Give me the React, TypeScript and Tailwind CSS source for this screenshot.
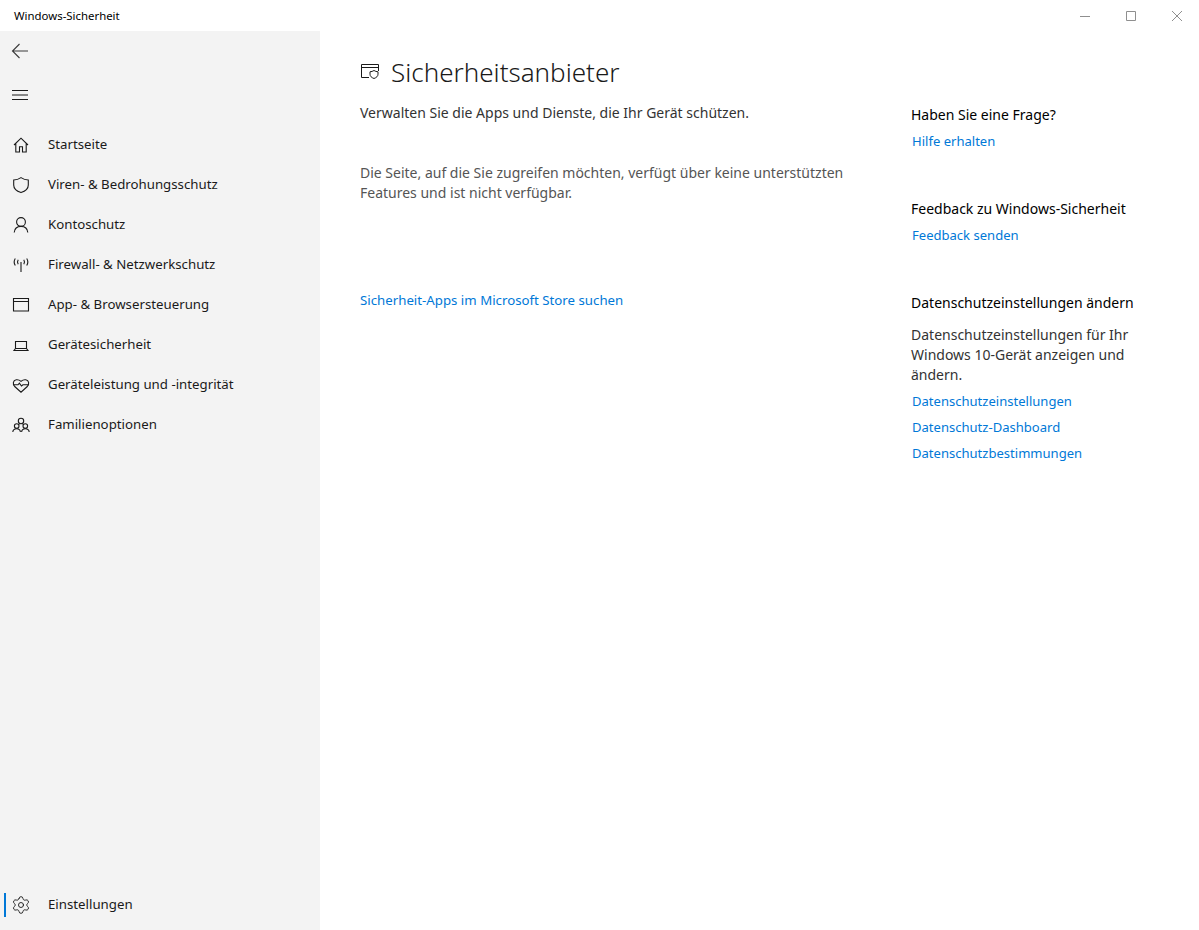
import type { ReactNode } from 'react';
import { Settings } from 'lucide-react';

const iconClass = 'w-5 h-5 text-[#1a1a1a]';

function Svg({ children }: { children: ReactNode }) {
  return (
    <svg viewBox="0 0 20 20" fill="none" stroke="currentColor" strokeWidth="1.1" className={iconClass}>
      {children}
    </svg>
  );
}

const navItems: { label: string; icon: ReactNode }[] = [
  {
    label: 'Startseite',
    icon: (
      <Svg>
        <path d="M3 10 10 3.200 17 10M4.800 8.600V17h3.700v-5.200h3V17h3.700V8.600" />
      </Svg>
    ),
  },
  {
    label: 'Viren- & Bedrohungsschutz',
    icon: (
      <Svg>
        <path d="M10 2.600c2.400 1.600 4.800 2.300 7.300 2.400v5c0 3.700-3 6.200-7.300 7.600-4.300-1.400-7.300-3.900-7.300-7.600V5c2.500-.1 4.900-.8 7.300-2.400Z" />
      </Svg>
    ),
  },
  {
    label: 'Kontoschutz',
    icon: (
      <Svg>
        <circle cx="10" cy="7" r="4.400" />
        <path d="M3.200 17.500c.3-3.800 3-6.100 6.800-6.100s6.500 2.300 6.800 6.100" />
      </Svg>
    ),
  },
  {
    label: 'Firewall- & Netzwerkschutz',
    icon: (
      <Svg>
        <path d="M10 7v10M7.200 4.800c-.9 1.400-.9 3 0 4.400M12.800 4.800c.9 1.400.9 3 0 4.400M4.300 3.500c-1.500 2.300-1.500 4.700 0 7M15.700 3.500c1.500 2.300 1.500 4.700 0 7" />
      </Svg>
    ),
  },
  {
    label: 'App- & Browsersteuerung',
    icon: (
      <Svg>
        <path d="M2.500 3.500h15v12.500h-15zM2.500 6.500h15" />
      </Svg>
    ),
  },
  {
    label: 'Gerätesicherheit',
    icon: (
      <Svg>
        <path d="M4.500 13.500V6.500h11v7M3 15.500h14l-1.500-2h-11z" />
      </Svg>
    ),
  },
  {
    label: 'Geräteleistung und -integrität',
    icon: (
      <Svg>
        <path d="M3.700 11.500C2.500 10 2 9 2.400 7.300 3 4.700 6.800 3.600 10 6.300c3.200-2.700 7-1.600 7.600 1 .4 1.700-.1 2.700-1.300 4.200L10 17.200Z" />
        <path d="M2.800 9.800H7l1.400-1.600 2.100 2.800 1.400-1.200h5.300" />
      </Svg>
    ),
  },
  {
    label: 'Familienoptionen',
    icon: (
      <Svg>
        <circle cx="10" cy="6" r="2.700" />
        <circle cx="5.700" cy="11" r="2.300" />
        <circle cx="14.300" cy="11" r="2.300" />
        <path d="M1.800 17c.2-1.900 1.800-3.200 3.900-3.200s3.500 1.300 3.700 3.200M10.600 17c.2-1.900 1.700-3.200 3.700-3.200s3.700 1.300 3.900 3.200M7.700 8.800c.3.200.5.400.7.700M12.300 8.800c-.3.200-.5.400-.7.700" />
      </Svg>
    ),
  },
];

function NavRow({ label, icon }: { label: string; icon: ReactNode }) {
  return (
    <div className="flex items-center h-10 pl-[11px]">
      <span className="w-5 h-5 flex-shrink-0 flex items-center justify-center">{icon}</span>
      <span className="ml-[17px] text-[13.25px] text-[#1a1a1a]">{label}</span>
    </div>
  );
}

function HelpLink({ children }: { children: ReactNode }) {
  return <div className="h-[26px] pl-px leading-[26px] text-[13.05px] text-[#0078d7]">{children}</div>;
}

export default function App() {
  return (
    <div
      className="w-[1199px] h-[930px] flex flex-col bg-white text-[14px] overflow-hidden"
      style={{ fontFamily: '"Noto Sans", sans-serif' }}
    >
      <div className="h-[31px] flex items-center flex-shrink-0">
        <span className="ml-[14px] text-[11.4px] text-black">Windows-Sicherheit</span>
        <div className="ml-auto flex items-center text-[#8f8f8f]">
          <svg viewBox="0 0 10 10" fill="none" stroke="currentColor" className="w-[10px] h-[10px] mr-[36px]">
            <path d="M0 5.500h10" />
          </svg>
          <svg viewBox="0 0 10 10" fill="none" stroke="currentColor" className="w-[10px] h-[10px] mr-[36px]">
            <path d="M.5.500h9v9h-9z" />
          </svg>
          <svg viewBox="0 0 10 10" fill="none" stroke="currentColor" className="w-[10px] h-[10px] mr-[17px]">
            <path d="M0 0l10 10M10 0 0 10" />
          </svg>
        </div>
      </div>

      <div className="flex-1 flex min-h-0">
        <aside className="w-[320px] flex-shrink-0 bg-[#f3f3f3] flex flex-col pb-[5px]">
          <div className="h-10 pl-[10px] flex items-center">
            <svg viewBox="0 0 20 20" fill="none" stroke="#3a3a3a" strokeWidth="1.100" className="w-5 h-5">
              <path d="M18 10H2.500M9.500 3 2.500 10l7 7" />
            </svg>
          </div>
          <div className="h-5 mt-[14px] pl-[10px] flex items-center">
            <svg viewBox="0 0 20 20" fill="none" stroke="#1a1a1a" strokeWidth="1.100" className="w-5 h-5">
              <path d="M2 5.500h16M2 10h16M2 14.500h16" />
            </svg>
          </div>
          <nav className="mt-5">
            {navItems.map((item) => (
              <NavRow key={item.label} label={item.label} icon={item.icon} />
            ))}
          </nav>
          <div className="mt-auto relative">
            <span className="absolute left-1 top-2 w-[2px] h-6 bg-[#0078d7]" />
            <NavRow label="Einstellungen" icon={<Settings size={20} strokeWidth={1.1} className="text-[#1a1a1a]" />} />
          </div>
        </aside>

        <main className="flex-1 flex min-w-0">
          <section className="w-[591px] pl-10 flex-shrink-0">
            <div className="flex items-center mt-[22px] h-[38px]">
              <svg viewBox="0 0 20 20" fill="none" stroke="#1a1a1a" className="w-5 h-5">
                <path d="M9 15.500H1.500v-13h17V9M1.500 5.500h17" />
                <path d="M14 8.500c1.300.8 2.500 1.200 4 1.300v2.400c0 2-1.500 3.400-4 4.300-2.500-.9-4-2.300-4-4.300V9.800c1.500-.1 2.700-.5 4-1.300Z" />
              </svg>
              <h1 className="ml-[11px] text-[26px] leading-[34px] font-light text-[#1a1a1a]">Sicherheitsanbieter</h1>
            </div>
            <p className="mt-3 leading-5 text-[#333]">Verwalten Sie die Apps und Dienste, die Ihr Gerät schützen.</p>
            <p className="mt-10 w-[500px] leading-5 text-[#555]">
              Die Seite, auf die Sie zugreifen möchten, verfügt über keine unterstützten Features und ist nicht verfügbar.
            </p>
            <p className="mt-[87px] leading-5 text-[13.25px] text-[#0078d7]">Sicherheit-Apps im Microsoft Store suchen</p>
          </section>

          <section className="flex-1 pt-[74px]">
            <h2 className="leading-5 text-black font-normal">Haben Sie eine Frage?</h2>
            <div className="mt-[3px]"><HelpLink>Hilfe erhalten</HelpLink></div>
            <h2 className="mt-[45px] leading-5 text-black font-normal">Feedback zu Windows-Sicherheit</h2>
            <div className="mt-[3px]"><HelpLink>Feedback senden</HelpLink></div>
            <h2 className="mt-[45px] leading-5 text-black font-normal">Datenschutzeinstellungen ändern</h2>
            <p className="mt-3 w-[230px] leading-5 text-[#333]">Datenschutzeinstellungen für Ihr Windows 10-Gerät anzeigen und ändern.</p>
            <div className="mt-[3px]">
              <HelpLink>Datenschutzeinstellungen</HelpLink>
              <HelpLink>Datenschutz-Dashboard</HelpLink>
              <HelpLink>Datenschutzbestimmungen</HelpLink>
            </div>
          </section>
        </main>
      </div>
    </div>
  );
}
